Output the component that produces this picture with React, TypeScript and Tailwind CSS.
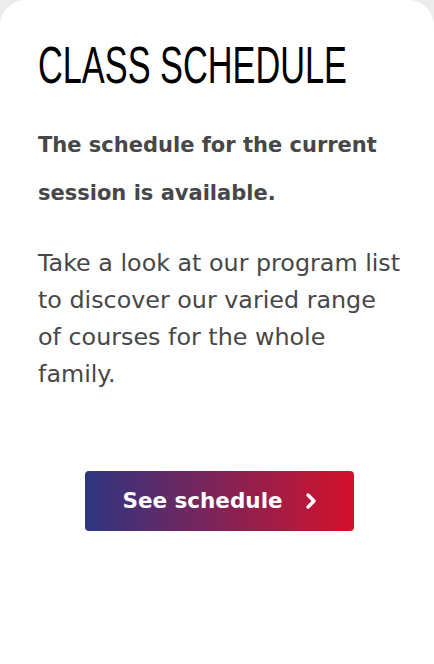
import { ChevronRight } from 'lucide-react';

export default function App() {
  return (
    <div className="min-h-screen w-full bg-[#ececec]">
      <section className="min-h-[664px] w-full rounded-t-[26px] bg-white px-[38px] pt-[35px]">
        <h1 className="origin-left scale-x-[0.66] whitespace-nowrap font-['Liberation_Sans',Arial,sans-serif] text-[52px] font-normal leading-[60px] text-black">
          CLASS SCHEDULE
        </h1>

        <p className="mt-[26px] font-['DejaVu_Sans',sans-serif] text-[21px] font-bold leading-[48px] text-[#474747]">
          The schedule for the current session is available.
        </p>

        <p className="mt-[28px] w-[364px] font-['DejaVu_Sans',sans-serif] text-[23.8px] leading-[37px] text-[#474747]">
          Take a look at our program list to discover our varied range of courses for the whole family.
        </p>

        <div className="mt-[78px] flex justify-center pl-[5px]">
          <a
            href="#"
            className="flex h-[60px] w-[269px] items-center justify-center gap-[16px] rounded-[4px] bg-linear-to-r/srgb from-[#2e3582] to-[#d4112b] pl-[6px] font-['DejaVu_Sans',sans-serif] text-[21.5px] font-bold text-white"
          >
            See schedule
            <ChevronRight size={24} strokeWidth={3.5} />
          </a>
        </div>
      </section>
    </div>
  );
}
